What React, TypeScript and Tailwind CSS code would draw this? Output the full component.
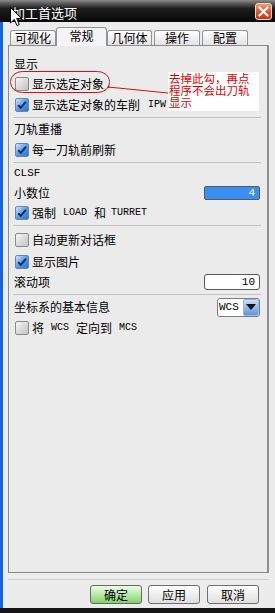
import React from "react";

function Cb({ checked }: { checked?: boolean }) {
  if (checked) {
    return (
      <span className="ml-px flex h-[14px] w-[14px] shrink-0 items-center justify-center rounded-[2px] border border-[#6d86a8] bg-linear-to-br from-[#d6e8fd] via-[#5b9be6] to-[#2f6fcb]">
        <svg width="10" height="10" viewBox="0 0 10 10">
          <path d="M1.2 5.2 L3.8 7.8 L8.8 1.8" fill="none" stroke="#12305f" strokeWidth="2" />
        </svg>
      </span>
    );
  }
  return (
    <span className="ml-px block h-[14px] w-[14px] shrink-0 rounded-[2px] border border-[#8a8a8a] bg-linear-to-br from-[#f7f7f7] via-[#dcdcdc] to-[#c4c4c4]" />
  );
}

const mono = "font-['Liberation_Mono',monospace] text-[10px]";

function Sep({ mt }: { mt: string }) {
  return <div className={`-mx-px h-px bg-[#c4c4c4] ${mt}`} />;
}

export default function App() {
  return (
    <div className="relative flex h-[613px] w-[275px] flex-col overflow-hidden bg-[#ececec] font-['Noto_Sans_CJK_SC',sans-serif] text-[12px] text-black">
      {/* title bar */}
      <div className="flex h-[22px] shrink-0 items-start justify-between bg-linear-to-b from-[#8a8a8a] via-[#1c1c1c] via-40% to-[#080808]">
        <span className="pl-[12px] pt-[4px] text-[13px] leading-[17px] text-white">加工首选项</span>
        <span className="mr-[3px] mt-[3px] flex h-[17px] w-[17px] items-center justify-center rounded-[3px] border border-[#f3d6cc] bg-linear-to-b from-[#f29a7a] via-[#e0592e] to-[#c2381a]">
          <svg width="11" height="11" viewBox="0 0 11 11">
            <path d="M1.5 1.5 L9.5 9.5 M9.5 1.5 L1.5 9.5" stroke="white" strokeWidth="2.2" strokeLinecap="round" />
          </svg>
        </span>
      </div>

      <div className="flex flex-1">
        <div className="w-[3px] bg-[#1b63d8]" />
        <div className="flex flex-1 flex-col">
          {/* tabs */}
          <div className="relative z-10 mt-[5px] flex h-[18px] items-end pl-[7px]">
            <div className="flex h-[15px] w-[46px] items-center justify-center rounded-t-[3px] border border-b-0 border-[#8d979b] bg-linear-to-b from-white to-[#e3e3e3] leading-[14px]">可视化</div>
            <div className="-mb-px flex h-[19px] w-[51px] items-start justify-center rounded-t-[3px] border border-b-0 border-[#8d979b] bg-[#f4f4f4] pt-[1px] leading-[14px]">常规</div>
            <div className="flex h-[15px] w-[45px] items-center justify-center rounded-t-[3px] border border-b-0 border-[#8d979b] bg-linear-to-b from-white to-[#e3e3e3] leading-[14px]">几何体</div>
            <div className="ml-[2px] flex h-[15px] w-[46px] items-center justify-center rounded-t-[3px] border border-b-0 border-[#8d979b] bg-linear-to-b from-white to-[#e3e3e3] leading-[14px]">操作</div>
            <div className="ml-[2px] flex h-[15px] w-[46px] items-center justify-center rounded-t-[3px] border border-b-0 border-[#8d979b] bg-linear-to-b from-white to-[#e3e3e3] leading-[14px]">配置</div>
          </div>

          {/* panel */}
          <div className="ml-[5px] flex h-[528px] w-[261px] flex-col border border-r-2 border-[#8c8c8c] bg-[#ebebeb] pl-[5px] pr-[7px] pt-[8px] leading-[14px]">
            <div className="flex h-[20px] items-center">显示</div>
            <div className="flex h-[20px] items-center gap-[3px]"><Cb />显示选定对象</div>
            <div className="flex h-[22px] items-center gap-[3px]"><Cb checked />显示选定对象的车削<span className={`${mono} ml-[5px]`}>IPW</span></div>
            <Sep mt="mt-[1px]" />
            <div className="flex h-[22px] items-center">刀轨重播</div>
            <div className="flex h-[19px] items-center gap-[3px]"><Cb checked />每一刀轨前刷新</div>
            <Sep mt="mt-[3px]" />
            <div className={`flex h-[20px] items-center ${mono} text-[11px]`}>CLSF</div>
            <div className="flex h-[19px] items-center justify-between">
              <span>小数位</span>
              <span className="flex h-[14px] w-[56px] items-center justify-end rounded-[2px] border border-[#5a5a5a] bg-[#3a8ff5] pr-[4px] font-['Liberation_Mono',monospace] text-[11px] text-white">4</span>
            </div>
            <div className="flex h-[22px] items-center gap-[3px]"><Cb checked /><span>强制</span><span className={`${mono} ml-[4px] mr-[4px]`}>LOAD</span><span>和</span><span className={`${mono} ml-[2px]`}>TURRET</span></div>
            <Sep mt="mt-[1px]" />
            <div className="mt-[3px] flex h-[22px] items-center gap-[3px]"><Cb />自动更新对话框</div>
            <div className="flex h-[21px] items-center gap-[3px]"><Cb checked />显示图片</div>
            <div className="flex h-[20px] items-center justify-between">
              <span>滚动项</span>
              <span className="flex h-[16px] w-[56px] items-center justify-end rounded-[3px] border border-[#5a5a5a] bg-white pr-[4px] font-['Liberation_Mono',monospace] text-[11px]">10</span>
            </div>
            <Sep mt="mt-[2px]" />
            <div className="flex h-[24px] items-center justify-between">
              <span>坐标系的基本信息</span>
              <span className="flex h-[19px] w-[43px] overflow-hidden rounded-[3px] border border-[#7b7b7b] bg-white">
                <span className="flex flex-1 items-center pl-[1px] font-['Liberation_Mono',monospace] text-[11px]">WCS</span>
                <span className="flex w-[16px] items-center justify-center rounded-[2px] border border-[#9bb8de] bg-linear-to-b from-[#c9defa] to-[#5b95de]">
                  <svg width="10" height="6" viewBox="0 0 10 6"><path d="M0 0 L10 0 L5 6 Z" fill="#111" /></svg>
                </span>
              </span>
            </div>
            <div className="flex h-[18px] items-center gap-[3px]"><Cb /><span>将</span><span className={`${mono} ml-[4px] mr-[4px]`}>WCS</span><span>定向到</span><span className={`${mono} ml-[4px]`}>MCS</span></div>
          </div>

          <div className="ml-[5px] mt-[6px] h-px w-[261px] bg-[#cfcfcf]" />

          <div className="mt-[5px] flex justify-end gap-[6px] pr-[16px]">
            <button className="h-[19px] w-[52px] rounded-[3px] border border-[#5e6f58] bg-linear-to-b from-[#effbe9] via-[#b9e9a8] to-[#82d16c] text-[12px] leading-[14px]">确定</button>
            <button className="h-[19px] w-[52px] rounded-[3px] border border-[#6f6f6f] bg-linear-to-b from-white to-[#dedede] text-[12px] leading-[14px]">应用</button>
            <button className="ml-px h-[19px] w-[52px] rounded-[3px] border border-[#6f6f6f] bg-linear-to-b from-white to-[#dedede] text-[12px] leading-[14px]">取消</button>
          </div>
        </div>
      </div>

      <div className="h-[5px] shrink-0 bg-[#151515]" />

      {/* annotation overlay */}
      <svg className="pointer-events-none absolute left-0 top-0" width="275" height="120" viewBox="0 0 275 120">
        <rect x="10.5" y="71.5" width="99" height="21" rx="12" ry="10" fill="none" stroke="#d81010" strokeWidth="1" />
        <path d="M108 87 L168 93" stroke="#d81010" strokeWidth="1" />
        <circle cx="108.5" cy="87" r="1" fill="#d81010" />
      </svg>
      <div className="absolute left-[168px] top-[72px] flex h-[39px] w-[91px] flex-col bg-white pl-px text-[11.5px] leading-[12px] text-[#e60000]">
        <span>去掉此勾，再点</span>
        <span>程序不会出刀轨</span>
        <span>显示</span>
      </div>

      {/* mouse cursor */}
      <svg className="pointer-events-none absolute left-[10px] top-[7px]" width="13" height="20" viewBox="0 0 13 20">
        <path d="M0.5 0.5 L0.5 16 L4.3 12.4 L7 18.6 L9.3 17.6 L6.7 11.5 L11.6 11.5 Z" fill="white" stroke="black" strokeWidth="1" />
      </svg>
    </div>
  );
}
